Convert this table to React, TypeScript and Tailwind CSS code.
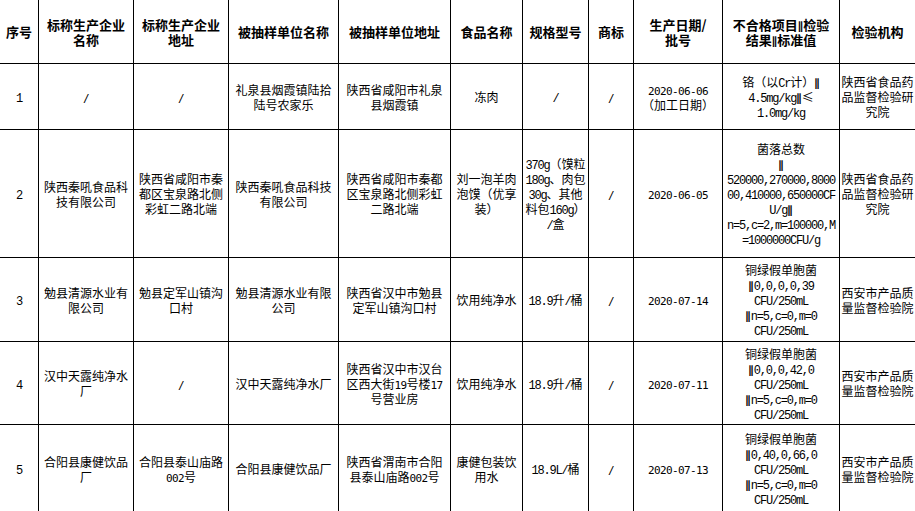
type Cell = string | string[];

const HEADERS: string[][] = [
  ["序号"],
  ["标称生产企业", "名称"],
  ["标称生产企业", "地址"],
  ["被抽样单位名称"],
  ["被抽样单位地址"],
  ["食品名称"],
  ["规格型号"],
  ["商标"],
  ["生产日期/", "批号"],
  ["不合格项目‖检验", "结果‖标准值"],
  ["检验机构"],
];

const ROWS: Cell[][] = [
  [
    "1",
    "/",
    "/",
    ["礼泉县烟霞镇陆拾", "陆号农家乐"],
    ["陕西省咸阳市礼泉", "县烟霞镇"],
    "冻肉",
    "/",
    "/",
    ["2020-06-06", "（加工日期）"],
    ["铬（以Cr计）‖", "4.5mg/kg‖≤", "1.0mg/kg"],
    ["陕西省食品药", "品监督检验研", "究院"],
  ],
  [
    "2",
    ["陕西秦吼食品科", "技有限公司"],
    ["陕西省咸阳市秦", "都区宝泉路北侧", "彩虹二路北端"],
    ["陕西秦吼食品科技", "有限公司"],
    ["陕西省咸阳市秦都", "区宝泉路北侧彩虹", "二路北端"],
    ["刘一泡羊肉", "泡馍（优享", "装）"],
    ["370g（馍粒", "180g、肉包", "30g、其他", "料包160g）", "/盒"],
    "/",
    "2020-06-05",
    [
      "菌落总数",
      "‖",
      "520000,270000,8000",
      "00,410000,650000CF",
      "U/g‖",
      "n=5,c=2,m=100000,M",
      "=1000000CFU/g",
    ],
    ["陕西省食品药", "品监督检验研", "究院"],
  ],
  [
    "3",
    ["勉县清源水业有", "限公司"],
    ["勉县定军山镇沟", "口村"],
    ["勉县清源水业有限", "公司"],
    ["陕西省汉中市勉县", "定军山镇沟口村"],
    "饮用纯净水",
    "18.9升/桶",
    "/",
    "2020-07-14",
    ["铜绿假单胞菌", "‖0,0,0,0,39", "CFU/250mL", "‖n=5,c=0,m=0", "CFU/250mL"],
    ["西安市产品质", "量监督检验院"],
  ],
  [
    "4",
    ["汉中天露纯净水", "厂"],
    "/",
    "汉中天露纯净水厂",
    ["陕西省汉中市汉台", "区西大街19号楼17", "号营业房"],
    "饮用纯净水",
    "18.9升/桶",
    "/",
    "2020-07-11",
    ["铜绿假单胞菌", "‖0,0,0,42,0", "CFU/250mL", "‖n=5,c=0,m=0", "CFU/250mL"],
    ["西安市产品质", "量监督检验院"],
  ],
  [
    "5",
    ["合阳县康健饮品", "厂"],
    ["合阳县泰山庙路", "002号"],
    "合阳县康健饮品厂",
    ["陕西省渭南市合阳", "县泰山庙路002号"],
    ["康健包装饮", "用水"],
    "18.9L/桶",
    "/",
    "2020-07-13",
    ["铜绿假单胞菌", "‖0,40,0,66,0", "CFU/250mL", "‖n=5,c=0,m=0", "CFU/250mL"],
    ["西安市产品质", "量监督检验院"],
  ],
];

// columns whose latin text looks like a typewriter face
const SERIF_COLS = [0, 6, 9];

const SANS_MONO = "font-['DejaVu_Sans_Mono',monospace] text-[11px] tracking-[-0.6px]";
const SERIF_MONO = "font-['Liberation_Mono',monospace] text-[12px] tracking-[-1.2px]";
// the double bar: drawn with the math "parallel to" sign, which DejaVu has
const BAR = "font-['DejaVu_Sans',sans-serif] font-bold text-[11px] text-black";

function Bar() {
  return <span className={BAR}>{"\u2225"}</span>;
}

function Mixed({ s, serif }: { s: string; serif: boolean }) {
  const parts = s.split(/([\x20-\x7E]+|‖)/).filter(Boolean);
  return (
    <>
      {parts.map((p, i) => {
        if (p === "‖") return <Bar key={i} />;
        if (/^[\x20-\x7E]+$/.test(p)) {
          return (
            <span key={i} className={serif ? SERIF_MONO : SANS_MONO}>
              {p}
            </span>
          );
        }
        return <span key={i}>{p}</span>;
      })}
    </>
  );
}

function cellBorder(col: number, row: number) {
  const r = col < 10 ? "border-r" : "";
  const b = row < 5 ? "border-b" : "";
  return `${r} ${b} border-black`;
}

export default function App() {
  return (
    <div className="h-[511px] w-[915px] overflow-hidden bg-white text-black font-['Noto_Sans_CJK_SC',sans-serif]">
      <div className="grid grid-cols-[39px_95px_95px_110px_112px_72px_66px_45px_89px_117px_75px] grid-rows-[64px_66px_128px_84px_83px_87px]">
        {HEADERS.map((lines, c) => (
          <div
            key={`h${c}`}
            className={`flex flex-col items-center justify-center text-center text-[13px] font-bold ${cellBorder(c, 0)}`}
          >
            {lines.map((l) => (
              <div key={l} className="h-[15px] leading-[15px] whitespace-nowrap">
                {l.split("‖").map((seg, i) => (
                  <span key={i}>
                    {i > 0 && <Bar />}
                    {seg}
                  </span>
                ))}
              </div>
            ))}
          </div>
        ))}

        {ROWS.map((row, r) =>
          row.map((cell, c) => {
            const lines = Array.isArray(cell) ? cell : [cell];
            return (
              <div
                key={`${r}-${c}`}
                className={`flex flex-col items-center justify-center text-center text-[12px] ${cellBorder(c, r + 1)}`}
              >
                {lines.map((l, i) => (
                  <div key={i} className="h-[15px] leading-[15px] whitespace-nowrap">
                    <Mixed s={l} serif={SERIF_COLS.includes(c)} />
                  </div>
                ))}
              </div>
            );
          })
        )}
      </div>
    </div>
  );
}
